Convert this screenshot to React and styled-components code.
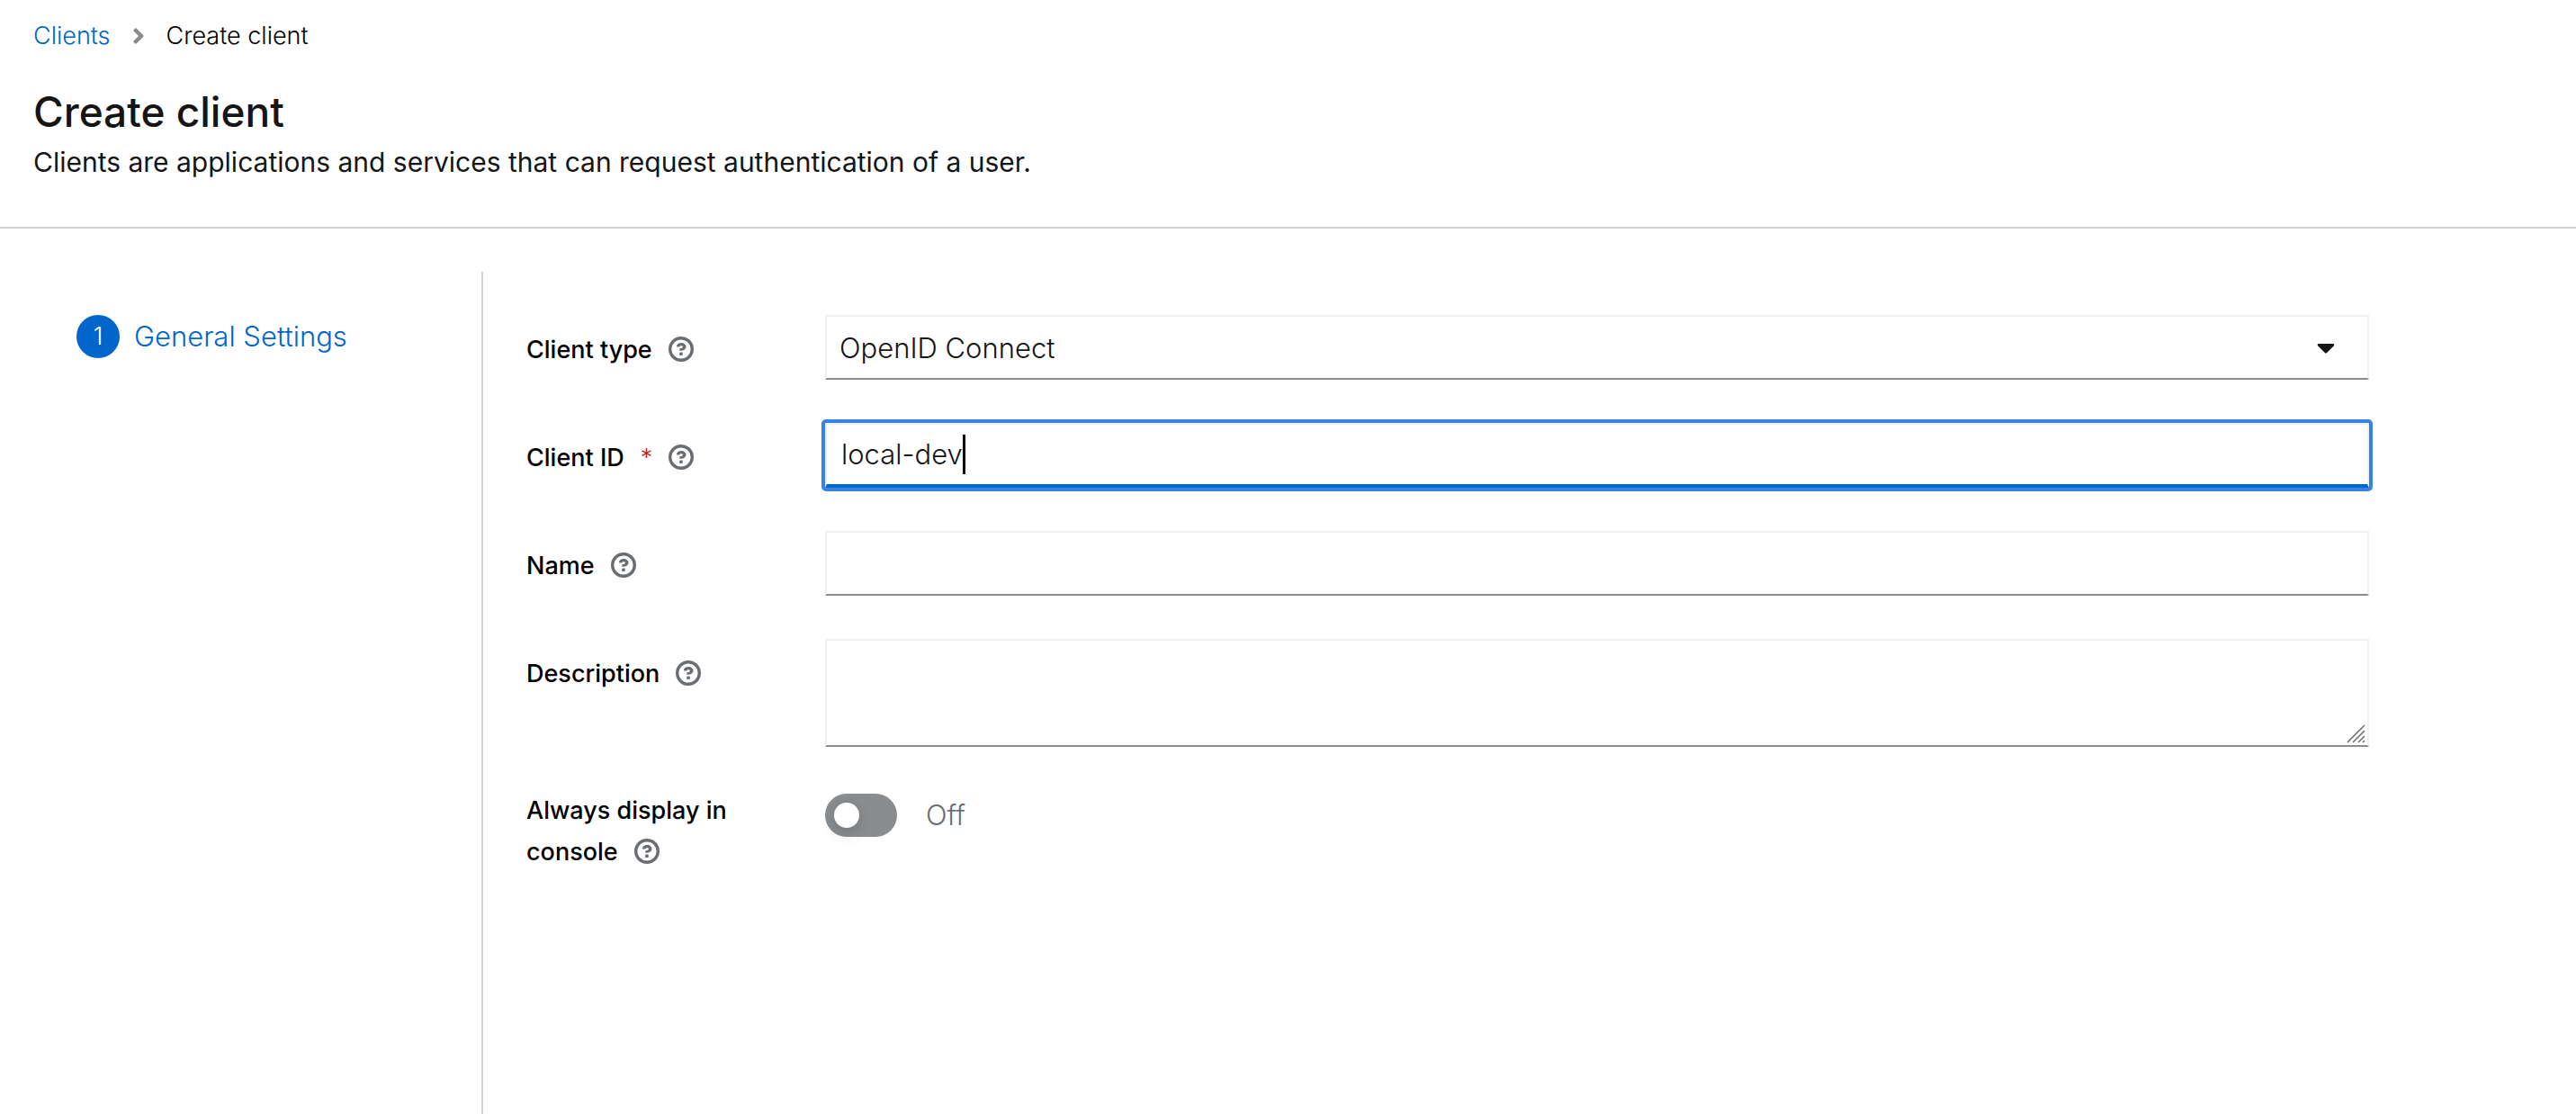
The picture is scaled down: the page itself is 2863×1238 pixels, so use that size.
import React, { useState } from "react";
import styled, { createGlobalStyle } from "styled-components";

const GlobalStyle = createGlobalStyle`
  *, *::before, *::after { box-sizing: border-box; }
  body {
    margin: 0;
    background: #fff;
    color: #151515;
    font-family: Inter, "Liberation Sans", sans-serif;
    font-size: 30px;
  }
  input, select, textarea, button { font-family: inherit; color: inherit; }
`;

const Page = styled.div`
  display: flex;
  flex-direction: column;
  min-height: 100vh;
`;

const Header = styled.header`
  padding: 20px 37px 48px;
  border-bottom: 2px solid #d2d2d2;
`;

const Breadcrumb = styled.nav`
  display: flex;
  align-items: center;
  gap: 24px;
  margin-bottom: 34px;
  font-size: 27px;
  font-weight: 300;
  line-height: 40px;
  color: #000;
`;

const BreadcrumbLink = styled.a`
  color: #06c;
  text-decoration: none;
`;

const Title = styled.h1`
  margin: 0;
  font-size: 46px;
  font-weight: 500;
  line-height: 60px;
`;

const Subtitle = styled.p`
  margin: 0;
  padding-top: 2px;
  font-size: 30px;
  line-height: 48px;
`;

const Wizard = styled.div`
  display: flex;
  flex: 1;
  margin-top: 48px;
`;

const Steps = styled.nav`
  flex: none;
  width: 537px;
  padding: 48px 32px 48px 85px;
  border-right: 2px solid #d2d2d2;
`;

const Step = styled.button`
  display: flex;
  align-items: center;
  gap: 16px;
  padding: 0;
  border: 0;
  background: none;
  color: #06c;
  font-size: 31px;
  font-weight: 300;
  line-height: 48px;
  cursor: pointer;
`;

const StepNumber = styled.span`
  width: 48px;
  height: 48px;
  border-radius: 50%;
  background: #06c;
  color: #fff;
  font-size: 27px;
  text-align: center;
`;

const Form = styled.form`
  display: flex;
  flex: 1;
  flex-direction: column;
  gap: 48px;
  max-width: 2144px;
  padding: 48px;
`;

const Row = styled.div`
  display: grid;
  grid-template-columns: 300px minmax(0, 1fr);
  column-gap: 32px;
`;

const LabelCell = styled.div`
  padding-top: ${(p) => (p.$flush ? "0" : "16px")};
  color: #000;
  font-size: 27px;
  line-height: 46px;
`;

const Label = styled.label`
  font-weight: 500;
`;

const Required = styled.span`
  margin-left: 18px;
  color: #c9190b;
  font-weight: 300;
`;

const HelpButton = styled.button`
  margin: 0 0 0 18px;
  padding: 0;
  border: 0;
  background: none;
  color: #6a6e73;
  font-size: 27px;
  line-height: 28px;
  cursor: pointer;

  svg {
    display: inline-block;
    width: 28px;
    height: 28px;
    vertical-align: -4px;
  }
`;

const Control = styled.div`
  position: relative;
  display: flex;
`;

const fieldBorder = `
  border: 2px solid #f0f0f0;
  border-bottom-color: #8a8d90;
  border-radius: 0;
  background: #fff;
  font-size: 31px;
  font-weight: 300;
`;

const Select = styled.select`
  ${fieldBorder}
  appearance: none;
  width: 100%;
  height: 72px;
  padding: 0 80px 0 14px;
  outline: 0;
`;

const SelectCaret = styled.svg`
  position: absolute;
  top: 20px;
  right: 38px;
  width: 20px;
  height: 32px;
  pointer-events: none;
`;

const TextBox = styled.div`
  ${fieldBorder}
  display: flex;
  align-items: center;
  width: 100%;
  height: 72px;
  padding: 0 16px;
  border-bottom-width: ${(p) => (p.$active ? "4px" : "2px")};
  border-bottom-color: ${(p) => (p.$active ? "#06c" : "#8a8d90")};
  outline: ${(p) => (p.$active ? "4px solid #3584e4" : "0")};
  border-radius: ${(p) => (p.$active ? "1px" : "0")};
`;

const TextInput = styled.input`
  flex: ${(p) => (p.$hugging ? "none" : "1")};
  field-sizing: ${(p) => (p.$hugging ? "content" : "fixed")};
  min-width: 0;
  padding: 0;
  border: 0;
  outline: 0;
  background: none;
  font-size: inherit;
  font-weight: inherit;
  line-height: 44px;
  caret-color: transparent;
`;

const Cursor = styled.span`
  width: 3px;
  height: 44px;
  background: #000;
`;

const TextArea = styled.textarea`
  ${fieldBorder}
  width: 100%;
  height: 120px;
  padding: 12px 16px;
  outline: 0;
  resize: none;
`;

const ResizeGrip = styled.svg`
  position: absolute;
  right: 3px;
  bottom: 3px;
  width: 22px;
  height: 22px;
  pointer-events: none;
`;

const SwitchControl = styled.div`
  display: flex;
  align-items: center;
  align-self: start;
  gap: 32px;
  padding-top: 4px;
`;

const Switch = styled.input`
  appearance: none;
  display: flex;
  align-items: center;
  width: 80px;
  height: 48px;
  margin: 0;
  padding: 0 10px;
  border-radius: 24px;
  background: ${(p) => (p.checked ? "#06c" : "#8a8d90")};
  cursor: pointer;

  &::before {
    content: "";
    width: 28px;
    height: 28px;
    margin-left: ${(p) => (p.checked ? "32px" : "0")};
    border-radius: 50%;
    background: #fff;
    box-shadow: 0 8px 16px rgba(3, 3, 3, 0.12), 0 0 8px rgba(3, 3, 3, 0.06);
  }
`;

const SwitchText = styled.label`
  color: #6a6e73;
  font-size: 31px;
  font-weight: 300;
  line-height: 48px;
`;

function Help({ topic }) {
  return (
    <HelpButton type="button" aria-label={`Help for ${topic}`}>
      <svg viewBox="0 0 1024 1024" fill="currentColor" aria-hidden="true">
        <path
          fillRule="evenodd"
          d="M512 0a512 512 0 1 0 0 1024a512 512 0 1 0 0-1024zM512 125a387 387 0 1 1 0 774a387 387 0 1 1 0-774z"
        />
        <path d="M521 576C627 576 714 502 714 414S628 254 521 254C366 254 334 338 329 407C329 414 335 416 343 416H445C451 416 458 415 461 406C461 363 583 357 583 414C583 442 556 471 521 473S447 480 447 522V554C447 571 456 576 472 576ZM575 751V655C575 645 567 637 557 637H465C455 637 447 645 447 655V751C447 761 455 769 465 769H557C567 769 575 761 575 751Z" />
      </svg>
    </HelpButton>
  );
}

function FieldLabel({ id, children, required, flush }) {
  return (
    <LabelCell $flush={flush}>
      <Label htmlFor={id}>{children}</Label>
      {required && <Required aria-hidden="true">*</Required>}
      <Help topic={children} />
    </LabelCell>
  );
}

export default function App() {
  const [clientId, setClientId] = useState("local-dev");
  const [alwaysShow, setAlwaysShow] = useState(false);

  return (
    <Page>
      <GlobalStyle />
      <Header>
        <Breadcrumb aria-label="Breadcrumb">
          <BreadcrumbLink href="#clients">Clients</BreadcrumbLink>
          <svg width="14" height="28" viewBox="0 0 256 512" fill="#8a8d90" aria-hidden="true">
            <path d="M224.3 273l-136 136c-9.4 9.4-24.6 9.4-33.9 0l-22.6-22.6c-9.4-9.4-9.4-24.6 0-33.9l96.4-96.4-96.4-96.4c-9.4-9.4-9.4-24.6 0-33.9L54.3 103c9.4-9.4 24.6-9.4 33.9 0l136 136c9.5 9.4 9.5 24.6.1 34z" />
          </svg>
          <span aria-current="page">Create client</span>
        </Breadcrumb>
        <Title>Create client</Title>
        <Subtitle>
          Clients are applications and services that can request authentication of a user.
        </Subtitle>
      </Header>

      <Wizard>
        <Steps aria-label="Steps">
          <Step type="button" aria-current="step">
            <StepNumber>1</StepNumber>
            General Settings
          </Step>
        </Steps>

        <Form onSubmit={(e) => e.preventDefault()}>
          <Row>
            <FieldLabel id="client-type">Client type</FieldLabel>
            <Control>
              <Select id="client-type" defaultValue="oidc">
                <option value="oidc">OpenID Connect</option>
                <option value="saml">SAML</option>
              </Select>
              <SelectCaret viewBox="0 0 320 512" fill="#151515" aria-hidden="true">
                <path d="M31.3 192h257.3c17.8 0 26.7 21.5 14.1 34.1L174.1 354.8c-7.8 7.8-20.5 7.8-28.3 0L17.2 226.1C4.6 213.5 13.5 192 31.3 192z" />
              </SelectCaret>
            </Control>
          </Row>

          <Row>
            <FieldLabel id="client-id" required>Client ID</FieldLabel>
            <TextBox $active>
              <TextInput
                id="client-id"
                type="text"
                required
                $hugging
                value={clientId}
                onChange={(e) => setClientId(e.target.value)}
              />
              <Cursor />
            </TextBox>
          </Row>

          <Row>
            <FieldLabel id="name">Name</FieldLabel>
            <TextBox>
              <TextInput id="name" type="text" />
            </TextBox>
          </Row>

          <Row>
            <FieldLabel id="description">Description</FieldLabel>
            <Control>
              <TextArea id="description" />
              <ResizeGrip viewBox="0 0 22 22" stroke="#6f6f6f" strokeWidth="1.6" aria-hidden="true">
                <path d="M1 20L20 1M7 20L20 7M13 20L20 13M18 20L20 18" />
              </ResizeGrip>
            </Control>
          </Row>

          <Row>
            <FieldLabel id="always-display" flush>Always display in console</FieldLabel>
            <SwitchControl>
              <Switch
                id="always-display"
                type="checkbox"
                role="switch"
                checked={alwaysShow}
                onChange={(e) => setAlwaysShow(e.target.checked)}
              />
              <SwitchText htmlFor="always-display">{alwaysShow ? "On" : "Off"}</SwitchText>
            </SwitchControl>
          </Row>
        </Form>
      </Wizard>
    </Page>
  );
}
